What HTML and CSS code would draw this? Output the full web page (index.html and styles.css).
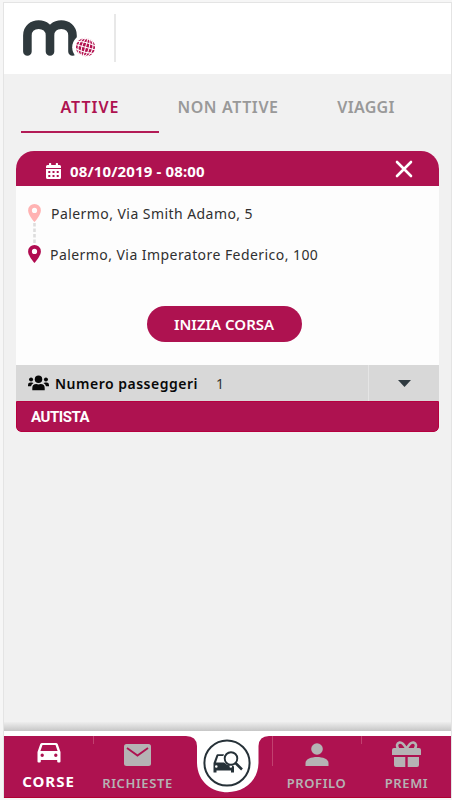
FILE: index.html
```html
<!DOCTYPE html>
<html lang="it">
<head>
<meta charset="utf-8">
<title>Corse</title>
<link rel="stylesheet" href="styles.css">
</head>
<body>
<div class="app">
  <header class="topbar">
    <svg class="logo" width="76" height="40" viewBox="0 0 76 40">
      <path d="M4.400 33.500V17.500C4.400 3 27 3 27 17.500V33.500M27 17.500C27 3 49.500 3 49.500 17.500V33.500" fill="none" stroke="#2f393d" stroke-width="8.600" stroke-linecap="round"/>
      <circle cx="62.500" cy="29.300" r="13.300" fill="#fff"/>
      <circle cx="62.500" cy="29.300" r="9.500" fill="#b3114f"/>
      <g fill="none" stroke="#fff" stroke-width="1" transform="rotate(15 62.500 29.300)">
        <path d="M62.500 19V40M52 29.300H73M53 25.500Q62.500 23.500 72 25.500M54 22Q62.500 19.500 71 22M53 33.100Q62.500 35.100 72 33.100M54 36.500Q62.500 39 71 36.500"/>
        <ellipse cx="62.500" cy="29.300" rx="3.700" ry="10"/>
        <ellipse cx="62.500" cy="29.300" rx="7.200" ry="10"/>
      </g>
    </svg>
    <span class="divider"></span>
  </header>
  <nav class="tabs">
    <span class="tab active"><span class="t1">ATTIVE</span></span>
    <span class="tab"><span class="t2">NON ATTIVE</span></span>
    <span class="tab"><span class="t3">VIAGGI</span></span>
  </nav>
  <main>
    <article class="card">
      <div class="card-head">
        <svg width="15" height="16" viewBox="0 0 15 16"><path fill="#fff" d="M0 5V3.500Q0 2 1.500 2H3V.7Q3 0 3.700 0h.8q.7 0 .7.700V2h4.600V.7q0-.7.700-.7h.8q.7 0 .7.700V2h1.500Q15 2 15 3.500V5zM0 6h15v8.500q0 1.500-1.500 1.500h-12Q0 16 0 14.500z"/><path fill="#ae1250" d="M2.300 8h2v2h-2zm4.200 0h2v2h-2zm4.200 0h2v2h-2zm-8.400 4h2v2h-2zm4.200 0h2v2h-2zm4.200 0h2v2h-2z"/></svg>
        <span class="date">08/10/2019 - 08:00</span>
        <svg class="close" width="18" height="18" viewBox="0 0 18 18"><path d="M2 2L16 16M16 2L2 16" stroke="#fff" stroke-width="2.600" stroke-linecap="round"/></svg>
      </div>
      <div class="card-body">
        <div class="stop">
          <svg width="13" height="18" viewBox="0 0 13 18"><path fill="#ffb3b3" fill-rule="evenodd" d="M6.500 0A6.400 6.400 0 0 0 .1 6.400C.1 11 6.500 18 6.500 18s6.400-7 6.400-11.600A6.400 6.400 0 0 0 6.500 0zm0 3.800a2.600 2.600 0 1 1 0 5.200 2.600 2.600 0 0 1 0-5.200z"/></svg>
          <span class="from">Palermo, Via Smith Adamo, 5</span>
        </div>
        <svg class="route-line" width="3" height="23" viewBox="0 0 3 23"><path d="M1.500 1V23" stroke="#ddd" stroke-width="2.600" stroke-dasharray="3.500 2"/></svg>
        <div class="stop">
          <svg width="13" height="18" viewBox="0 0 13 18"><path fill="#b00b50" fill-rule="evenodd" d="M6.500 0A6.400 6.400 0 0 0 .1 6.400C.1 11 6.500 18 6.500 18s6.400-7 6.400-11.600A6.400 6.400 0 0 0 6.500 0zm0 3.800a2.600 2.600 0 1 1 0 5.200 2.600 2.600 0 0 1 0-5.200z"/></svg>
          <span class="to">Palermo, Via Imperatore Federico, 100</span>
        </div>
        <button class="start"><span>INIZIA CORSA</span></button>
      </div>
      <div class="passengers">
        <svg width="21" height="16" viewBox="0 0 22 16" fill="#080808"><circle cx="11" cy="4" r="3.900"/><path d="M4.500 15.500v-2.300q0-4.200 4.200-4.200 2.300 1 4.600 0 4.200 0 4.200 4.200v2.300z"/><circle cx="3.200" cy="4.400" r="2.100"/><circle cx="18.800" cy="4.400" r="2.100"/><path d="M0 11.500V10q0-2.500 2.500-2.500H4q1 0 1.800.6-2.400 1.200-2.600 3.400zM22 11.500V10q0-2.500-2.500-2.500H18q-1 0-1.800.6 2.400 1.200 2.600 3.400z"/></svg>
        <span class="pass-label">Numero passeggeri</span>
        <span class="count">1</span>
        <span class="dropdown"><svg width="13" height="7" viewBox="0 0 13 7"><path d="M0 0H13L6.500 7z" fill="#2f3a40"/></svg></span>
      </div>
      <div class="role"><span>AUTISTA</span></div>
    </article>
  </main>
  <div class="shade"></div>
  <footer class="bottom">
    <svg class="bar" width="447" height="62" viewBox="0 0 447 62">
      <path d="M0 0H182Q192.500 0 193 10V27C194 66 253 66 254.500 27V10Q255 0 265 0H447V62H0z" fill="#ae1250"/>
      <path d="M0 61.500H447" stroke="#b00032"/>
      <path d="M89.500 0V8M357.500 0V8M268.500 0V30" stroke="#c2416f"/>
    </svg>
    <a class="item on">
      <svg width="24" height="20" viewBox="0 0 24 20"><path fill="#fff" fill-rule="evenodd" d="M5.200 0H18.800Q20.300 0 20.800 1.300L23.500 9V18.500Q23.500 19.500 22.500 19.500H21.200Q20.200 19.500 20.200 18.500V17H3.800V18.500Q3.800 19.500 2.800 19.500H1.500Q.5 19.500.5 18.500V9L3.200 1.300Q3.700 0 5.200 0zM5.500 2L3.400 8H20.600L18.500 2zM5.200 10.500a1.700 1.700 0 1 0 0 3.400 1.700 1.700 0 0 0 0-3.400zm13.600 0a1.700 1.700 0 1 0 0 3.400 1.700 1.700 0 0 0 0-3.400z"/></svg>
      <span>CORSE</span>
    </a>
    <a class="item mail">
      <svg width="27" height="22" viewBox="0 0 27 22"><rect width="27" height="22" rx="2.500" fill="#b5b3b4"/><path d="M3 4L13.500 11.500L24 4" fill="none" stroke="#ae1250" stroke-width="1.900"/></svg>
      <span>RICHIESTE</span>
    </a>
    <a class="search">
      <svg width="48" height="48" viewBox="0 0 48 48"><circle cx="24" cy="24" r="22.600" fill="#fff" stroke="#263138" stroke-width="2"/><path fill="#263138" fill-rule="evenodd" d="M10.500 24L13.500 16Q13.800 15.300 14.600 15.300H21L20.300 17H15.300L13 23.500H21.200Q24 27 29 26.200L31 27.500V33.500H28V31.500H13.500V33.500H10.500zM13.300 26.200a1.300 1.300 0 1 0 0 2.600 1.300 1.300 0 0 0 0-2.600zm14.500 0a1.300 1.300 0 1 0 0 2.600 1.300 1.300 0 0 0 0-2.600z"/><circle cx="28" cy="19.500" r="6.300" fill="#fff" stroke="#263138" stroke-width="1.900"/><path d="M32.500 24L39 30.500" stroke="#263138" stroke-width="2.500"/></svg>
    </a>
    <a class="item profile">
      <svg width="24" height="24" viewBox="0 0 24 24" fill="#b5b3b4"><circle cx="12" cy="6" r="5.800"/><path d="M.5 23V20C.5 12 23.500 12 23.500 20V23z"/></svg>
      <span>PROFILO</span>
    </a>
    <a class="item gift">
      <svg width="29" height="26" viewBox="0 0 29 26"><path fill="#b5b3b4" d="M2 7H27Q29 7 29 9V14H0V9Q0 7 2 7zM2 16H13.300V26H4Q2 26 2 24zM15.700 16H27V24Q27 26 25 26H15.700z"/><path d="M14.500 8Q11 1 7.500 1.500Q3.500 3 6 7.500M14.500 8Q18 1 21.500 1.500Q25.500 3 23 7.500" fill="none" stroke="#b5b3b4" stroke-width="2.600"/></svg>
      <span>PREMI</span>
    </a>
  </footer>
</div>
</body>
</html>
```
FILE: styles.css
```css
* { box-sizing: border-box; }
body { margin: 0; background: #f6f6f6; font-family: "Noto Sans", sans-serif; }
svg { display: block; flex: none; }
span { white-space: nowrap; }
.app { width: 449px; height: 796px; margin: 2px 0 0 3px; border: 1px solid #e4e4e4; border-bottom: 0; background: #f1f1f1; display: flex; flex-direction: column; }
.topbar { height: 71px; flex: none; background: #fff; display: flex; padding: 11px 0 0 19px; }
.logo { margin-top: 4px; }
.divider { width: 2px; height: 48px; margin-left: 15px; background: #e8e8e8; }
.tabs { display: grid; grid-template-columns: repeat(3, 138px); margin: 17px 0 0 17px; height: 42px; flex: none; }
.tab { display: flex; justify-content: center; line-height: 32px; color: #999; font-size: 16px; font-weight: 600; }
.active { color: #ae1250; border-bottom: 2px solid #b31b56; }
.t1 { letter-spacing: 1px; }
.t2 { letter-spacing: .6px; }
.t3 { letter-spacing: .3px; }
.card { width: 423px; height: 281px; margin: 18px 0 0 12px; border-radius: 18px 18px 5px 5px; overflow: hidden; background: #fdfdfd; }
.card-head { height: 35px; background: #ae1250; color: #fff; display: flex; align-items: center; padding: 4px 26px 0 30px; font-size: 15px; font-weight: 700; letter-spacing: .14px; }
.date { margin-left: 9px; }
.close { margin: -4px 0 0 auto; }
.card-body { height: 179px; padding: 18px 12px 0; display: flex; flex-direction: column; align-items: flex-start; }
.stop { display: flex; height: 18px; align-items: center; font-size: 14px; color: #303030; letter-spacing: .44px; }
.from { margin-left: 10px; }
.to { margin-left: 9px; }
.route-line { margin-left: 5px; }
.start { align-self: center; width: 155px; height: 36px; margin-top: 43px; margin-right: 7px; padding: 0; border: 0; border-radius: 18px; background: #ae1250; color: #fff; font: 600 15px "Noto Sans", sans-serif; }
.passengers { height: 36px; background: #d8d8d8; display: flex; align-items: center; padding-left: 12px; font-size: 14px; color: #333; }
.pass-label { margin-left: 6px; font-weight: 600; color: #080808; letter-spacing: .5px; }
.count { margin-left: 18px; }
.dropdown { margin-left: auto; width: 71px; height: 36px; border-left: 1px solid #e5e5e5; display: flex; align-items: center; justify-content: center; }
.role { height: 31px; border: 1px solid #b6003f; border-radius: 0 0 5px 5px; background: #ae1250; color: #fff; padding-left: 14px; font: 700 15px/31px Roboto, sans-serif; letter-spacing: -.45px; }
.shade { height: 9px; margin-top: auto; flex: none; background: linear-gradient(#eee, #c6c6c6); }
.bottom { position: relative; height: 67px; flex: none; background: #fff; padding-top: 5px; display: grid; grid-template-columns: 89px 89px 89px 91px 89px; }
.bar { position: absolute; left: 0; top: 5px; }
.item, .search { position: relative; display: flex; flex-direction: column; align-items: center; }
.item { height: 57px; justify-content: flex-end; color: #b5b3b4; font-size: 13px; font-weight: 600; padding-top: 7px; letter-spacing: .6px; }
.item svg { margin-bottom: auto; }
.item span { line-height: 20px; }
.on { color: #fff; font-size: 15px; font-weight: 700; letter-spacing: 1px; }
.on span { position: relative; top: -2px; }
.mail svg { margin-top: 1px; }
.gift svg { margin-top: -2px; }
.search { padding-top: 3px; }
```
